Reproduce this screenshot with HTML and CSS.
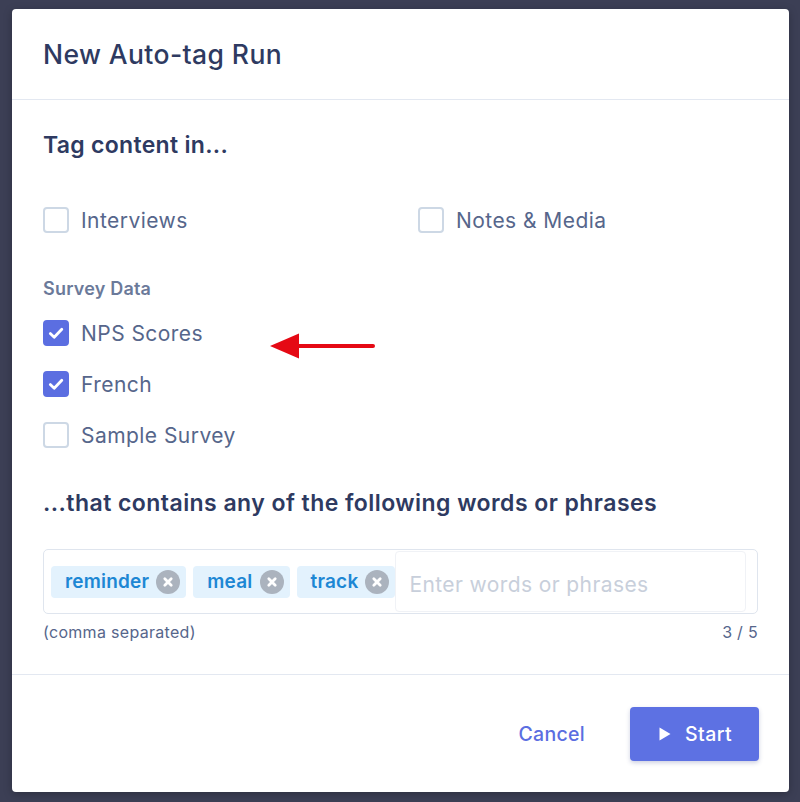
FILE: index.html
```html
<!DOCTYPE html>
<html>
<head>
<meta charset="utf-8">
<link rel="stylesheet" href="styles.css">
</head>
<body>
<div class="dialog">
  <div class="dialog-header">
    <h1 class="title">New Auto-tag Run</h1>
  </div>
  <div class="dialog-body">
    <h2 class="section-title">Tag content in...</h2>
    <div class="source-grid">
      <label class="check"><span class="box"></span><span class="check-label">Interviews</span></label>
      <label class="check"><span class="box"></span><span class="check-label">Notes &amp; Media</span></label>
    </div>
    <div class="group-label">Survey Data</div>
    <div class="survey-list">
      <label class="check annotated"><span class="box checked"><svg viewBox="0 0 26 26" width="26" height="26"><path d="M7.3 13.6 L11.2 17.3 L18.8 9.2" fill="none" stroke="#fff" stroke-width="2.8" stroke-linecap="round" stroke-linejoin="round"/></svg></span><span class="check-label">NPS Scores</span>
        <svg class="arrow" width="108" height="28" viewBox="0 0 108 28"><path d="M28 14 H104" stroke="#e50914" stroke-width="4" stroke-linecap="round"/><path d="M1 14 L30 1.5 L30 26.5 Z" fill="#e50914"/></svg>
      </label>
      <label class="check"><span class="box checked"><svg viewBox="0 0 26 26" width="26" height="26"><path d="M7.3 13.6 L11.2 17.3 L18.8 9.2" fill="none" stroke="#fff" stroke-width="2.8" stroke-linecap="round" stroke-linejoin="round"/></svg></span><span class="check-label">French</span></label>
      <label class="check"><span class="box"></span><span class="check-label">Sample Survey</span></label>
    </div>
    <h2 class="section-title second">...that contains any of the following words or phrases</h2>
    <div class="tag-input">
      <span class="chip">reminder<span class="chip-x"><svg viewBox="0 0 24 24" width="24" height="24"><path d="M8.8 8.8 L15.2 15.2 M15.2 8.8 L8.8 15.2" stroke="#fff" stroke-width="2.8" stroke-linecap="round"/></svg></span></span>
      <span class="chip">meal<span class="chip-x"><svg viewBox="0 0 24 24" width="24" height="24"><path d="M8.8 8.8 L15.2 15.2 M15.2 8.8 L8.8 15.2" stroke="#fff" stroke-width="2.8" stroke-linecap="round"/></svg></span></span>
      <span class="chip">track<span class="chip-x"><svg viewBox="0 0 24 24" width="24" height="24"><path d="M8.8 8.8 L15.2 15.2 M15.2 8.8 L8.8 15.2" stroke="#fff" stroke-width="2.8" stroke-linecap="round"/></svg></span></span>
      <span class="text-field">Enter words or phrases</span>
    </div>
    <div class="helper">
      <span>(comma separated)</span>
      <span>3 / 5</span>
    </div>
  </div>
  <div class="dialog-footer">
    <button class="btn-cancel">Cancel</button>
    <button class="btn-start"><svg width="12" height="14" viewBox="0 0 12 14"><path d="M0.5 0.5 L11.5 7 L0.5 13.5 Z" fill="#fff"/></svg>Start</button>
  </div>
</div>
</body>
</html>
```

FILE: styles.css
```css
* { box-sizing: border-box; }
html, body {
  margin: 0;
  padding: 0;
  background: #3c3f55;
  font-family: Inter, "Noto Sans", sans-serif;
}
body {
  padding: 9px 11px 10px 12px;
  height: 802px;
}
.dialog {
  background: #fff;
  border-radius: 4px;
  height: 783px;
  display: flex;
  flex-direction: column;
  box-shadow: 0 2px 8px rgba(0,0,0,0.25);
}
.dialog-header {
  height: 91px;
  border-bottom: 1px solid #e3e8f1;
  display: flex;
  align-items: center;
  padding: 0 31px;
}
.title {
  margin: 0;
  font-size: 26.5px;
  font-weight: 500;
  color: #2e3a61;
  letter-spacing: 0.4px;
}
.dialog-body {
  padding: 31px 31px 0 31px;
  flex: 1;
  border-bottom: 1px solid #e3e8f1;
}
.section-title {
  margin: 0;
  font-size: 23px;
  line-height: 28px;
  font-weight: 600;
  color: #2e3a61;
  letter-spacing: 0.3px;
}
.source-grid {
  margin-top: 47px;
  display: grid;
  grid-template-columns: 375px 1fr;
}
.check {
  display: flex;
  align-items: center;
  height: 28px;
}
.box {
  width: 26px;
  height: 26px;
  border: 2px solid #cdd8e5;
  border-radius: 4px;
  flex: none;
  display: flex;
  align-items: center;
  justify-content: center;
  margin-right: 12px;
}
.box.checked {
  background: #5b6ee1;
  border-color: #5b6ee1;
}
.box.checked svg { flex: none; margin: -2px; }
.check-label {
  font-size: 21px;
  color: #56668b;
  letter-spacing: 0.45px;
}
.group-label {
  margin-top: 43px;
  font-size: 18px;
  font-weight: 600;
  color: #6b7a9a;
  line-height: 24px;
  letter-spacing: 0.2px;
}
.survey-list {
  margin-top: 18px;
  display: flex;
  flex-direction: column;
  gap: 23px;
}
.annotated { position: relative; }
.arrow {
  position: absolute;
  left: 226px;
  top: 13px;
}
.section-title.second {
  margin-top: 40px;
  letter-spacing: 0.45px;
}
.tag-input {
  margin-top: 32px;
  height: 65px;
  border: 1.5px solid #dfe5ee;
  border-radius: 5px;
  display: flex;
  align-items: center;
  padding: 0 11px 0 7px;
  gap: 7px;
}
.chip {
  display: inline-flex;
  align-items: center;
  height: 32px;
  background: #e3f2fd;
  border-radius: 4px;
  padding: 0 6px 0 14px;
  font-size: 19px;
  font-weight: 600;
  color: #1d87d4;
  flex: none;
  letter-spacing: 0.2px;
}
.chip-x {
  width: 24px;
  height: 24px;
  border-radius: 50%;
  background: #abb3be;
  margin-left: 7px;
  display: inline-flex;
}
.text-field {
  flex: 1;
  align-self: stretch;
  margin: 1px 0 1px -7px;
  border: 1px solid #f0f2f6;
  border-radius: 4px;
  display: flex;
  align-items: center;
  padding: 6px 0 0 13px;
  font-size: 21px;
  color: #c8cfdb;
  letter-spacing: 0.4px;
}
.helper {
  margin-top: 8px;
  display: flex;
  justify-content: space-between;
  font-size: 16px;
  color: #56668b;
  line-height: 20px;
  letter-spacing: 0.3px;
}
.dialog-footer {
  height: 117px;
  display: flex;
  align-items: center;
  justify-content: flex-end;
  padding: 0 30px 0 31px;
}
.btn-cancel {
  border: none;
  background: none;
  font-family: inherit;
  font-size: 19.5px;
  font-weight: 500;
  color: #5b6ee1;
  margin-right: 45px;
  padding: 0;
  cursor: pointer;
  letter-spacing: 0.3px;
}
.btn-start {
  width: 129px;
  height: 54px;
  border: none;
  border-radius: 4px;
  background: #5d71e3;
  color: #fff;
  font-family: inherit;
  font-size: 19.5px;
  font-weight: 500;
  display: flex;
  align-items: center;
  justify-content: center;
  gap: 14px;
  box-shadow: 0 2px 4px rgba(60,70,140,0.25);
  letter-spacing: 0.4px;
  padding-right: 4px;
}
```
